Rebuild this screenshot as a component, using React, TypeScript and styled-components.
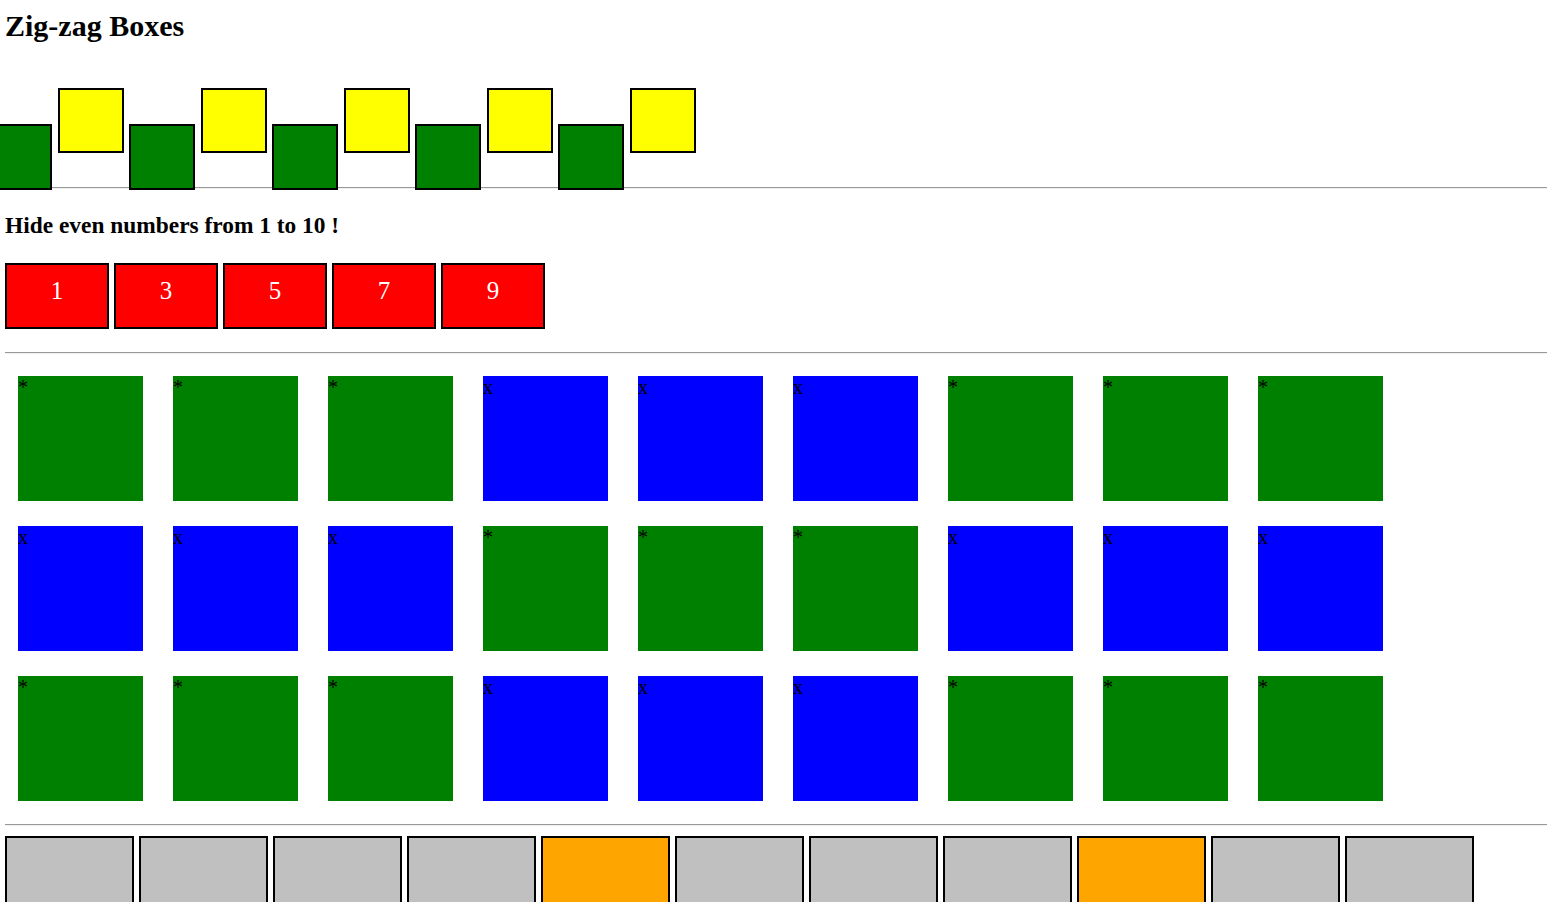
import { FC } from 'react';
import styled, { createGlobalStyle } from 'styled-components';

const GlobalStyle = createGlobalStyle`
  html, body {
    margin: 0;
    padding: 0;
    background: #ffffff;
    overflow: hidden;
  }
  body {
    font-family: "Liberation Serif", "Times New Roman", serif;
    color: #000000;
  }
`;

const Page = styled.div`
  display: flex;
  flex-direction: column;
  padding-left: 5px;
`;

const Title = styled.h2`
  margin: 9px 0 0;
  font-size: 30px;
  line-height: 34px;
  font-weight: bold;
`;

const ZigZagRow = styled.div`
  display: flex;
  align-items: flex-start;
  gap: 5.5px;
  margin: 44px 0 0 -19px;
  height: 103px;
`;

const ZigBox = styled.div<{ $low: boolean }>`
  position: relative;
  z-index: 1;
  box-sizing: border-box;
  width: 66px;
  height: ${props => (props.$low ? '66px' : '65px')};
  border: 2px solid #000000;
  background: ${props => (props.$low ? '#008000' : '#ffff00')};
  margin-top: ${props => (props.$low ? '37px' : '1px')};
`;

const Rule = styled.hr<{ $top: number }>`
  margin: ${props => props.$top}px 0 0;
  height: 0;
  border: none;
  border-top: 1px solid #9a9a9a;
  border-bottom: 1px solid #eeeeee;
`;

const Subtitle = styled.h3`
  margin: 23px 0 0;
  font-size: 23.4px;
  line-height: 27px;
  font-weight: bold;
`;

const NumberRow = styled.div`
  display: flex;
  gap: 5px;
  margin-top: 24px;
`;

const NumberBox = styled.div`
  box-sizing: border-box;
  width: 104px;
  height: 66px;
  border: 2px solid #000000;
  background: #ff0000;
  color: #ffffff;
  font-size: 25px;
  line-height: 29px;
  padding-top: 11px;
  text-align: center;
`;

const Grid = styled.div`
  display: grid;
  grid-template-columns: repeat(9, 125px);
  column-gap: 30px;
  row-gap: 25px;
  margin-top: 22px;
  padding-left: 13px;
`;

const Cell = styled.div<{ $on: boolean }>`
  width: 125px;
  height: 125px;
  background: ${props => (props.$on ? '#008000' : '#0000ff')};
  font-size: 20px;
  line-height: 23px;
`;

const SwatchRow = styled.div`
  display: flex;
  gap: 5px;
  margin-top: 10px;
`;

const Swatch = styled.div<{ $hot: boolean }>`
  box-sizing: border-box;
  width: 129px;
  height: 90px;
  border: 2px solid #000000;
  background: ${props => (props.$hot ? '#ffa500' : '#c0c0c0')};
`;

const zigzag = Array.from({ length: 10 }, (_, i) => i % 2 === 0);
const odds = [1, 3, 5, 7, 9];
const rowPattern = [true, true, true, false, false, false, true, true, true];
const rows = [0, 1, 2];
const swatches = Array.from({ length: 11 }, (_, i) => i === 4 || i === 8);

const App: FC = () => (
  <>
    <GlobalStyle />
    <Page>
      <Title>Zig-zag Boxes</Title>
      <ZigZagRow>
        {zigzag.map((low, i) => (
          <ZigBox key={i} $low={low} />
        ))}
      </ZigZagRow>
      <Rule $top={-3} />
      <Subtitle>Hide even numbers from 1 to 10 !</Subtitle>
      <NumberRow>
        {odds.map(n => (
          <NumberBox key={n}>{n}</NumberBox>
        ))}
      </NumberRow>
      <Rule $top={23} />
      <Grid>
        {rows.map(r =>
          rowPattern.map((on, c) => {
            const isOn = r === 1 ? !on : on;
            return (
              <Cell key={`${r}-${c}`} $on={isOn}>
                {isOn ? '*' : 'x'}
              </Cell>
            );
          })
        )}
      </Grid>
      <Rule $top={23} />
      <SwatchRow>
        {swatches.map((hot, i) => (
          <Swatch key={i} $hot={hot} />
        ))}
      </SwatchRow>
    </Page>
  </>
);

export default App;
